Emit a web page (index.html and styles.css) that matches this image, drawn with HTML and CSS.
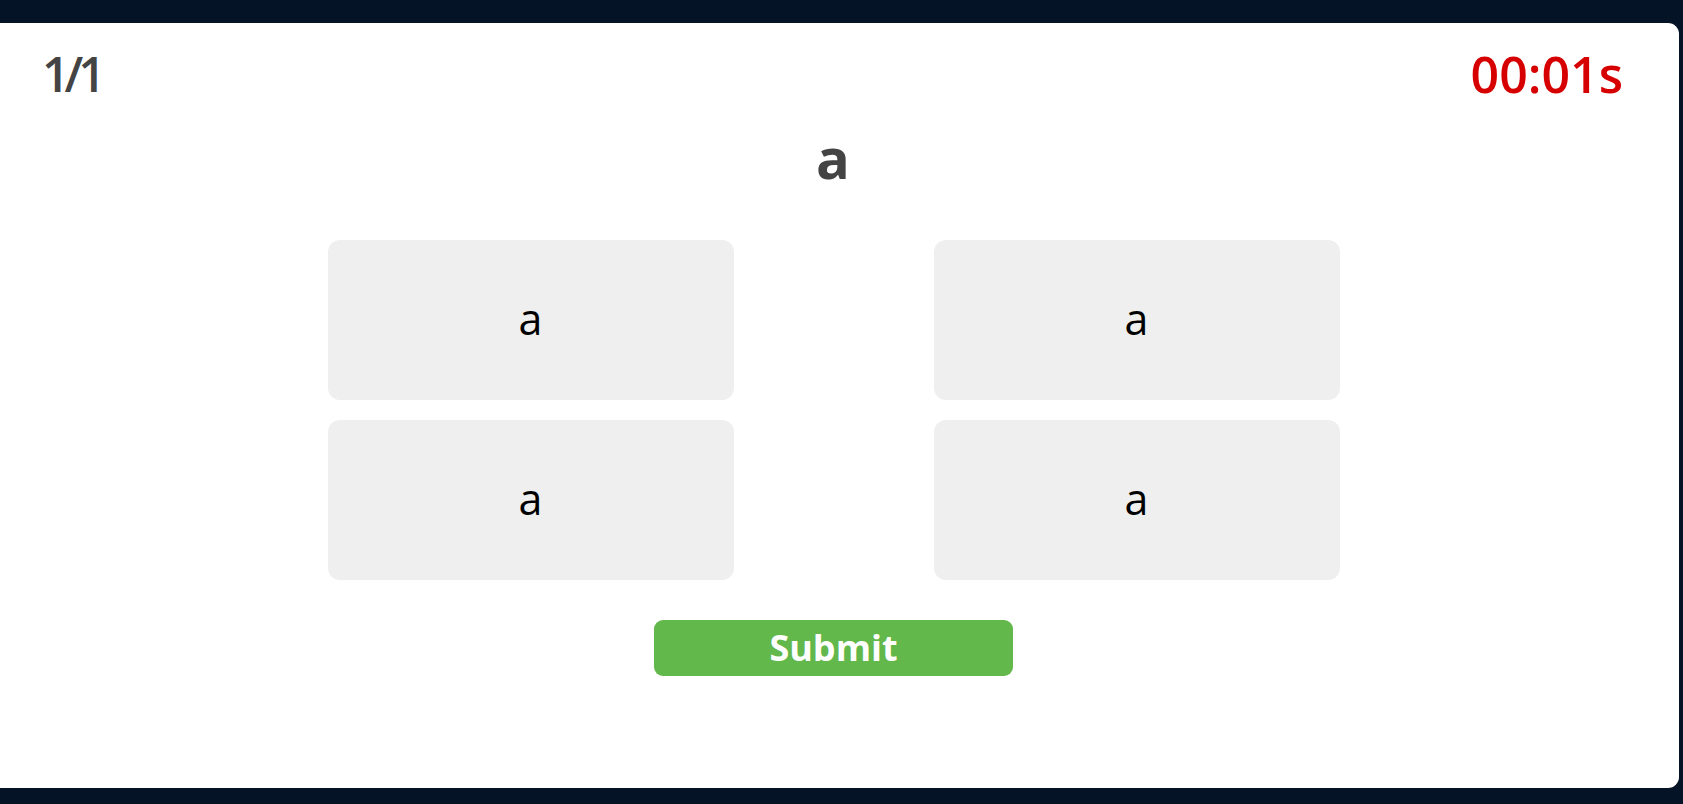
FILE: index.html
```html
<!DOCTYPE html>
<html lang="en">
<head>
<meta charset="utf-8">
<title>Quiz</title>
<link rel="stylesheet" href="styles.css">
</head>
<body>
  <main class="card">
    <header class="top">
      <span class="count">1/1</span>
      <span class="timer">00:01s</span>
    </header>
    <h1 class="question">a</h1>
    <div class="options">
      <button class="option">a</button>
      <button class="option">a</button>
      <button class="option">a</button>
      <button class="option">a</button>
    </div>
    <button class="submit">Submit</button>
  </main>
</body>
</html>
```
FILE: styles.css
```css
html, body {
  margin: 0;
  padding: 0;
}
body {
  background: #051326;
  height: 804px;
  overflow: hidden;
  font-family: "Open Sans", "Liberation Sans", sans-serif;
}
.card {
  margin-top: 23px;
  width: 1679px;
  height: 765px;
  box-sizing: border-box;
  background: #ffffff;
  border-radius: 0 11px 11px 0;
  padding: 27px 0 0 0;
  display: flex;
  flex-direction: column;
  align-items: stretch;
}
.top {
  display: flex;
  justify-content: space-between;
  padding: 0 56px 0 42px;
  font-size: 48px;
  line-height: 1;
  font-weight: 600;
  height: 48px;
}
.count {
  color: #444444;
  letter-spacing: -5px;
}
.timer {
  color: #d60000;
  font-size: 50px;
  position: relative;
  top: -1px;
}
.question {
  margin: 31px 13px 0 0;
  text-align: center;
  font-size: 56px;
  line-height: 1;
  font-weight: 700;
  color: #444444;
}
.options {
  margin: 55px 0 0 0;
  align-self: center;
  position: relative;
  left: -6px;
  display: grid;
  grid-template-columns: 406px 406px;
  grid-auto-rows: 160px;
  column-gap: 200px;
  row-gap: 20px;
}
.option {
  border: 0;
  margin: 0;
  background: #efefef;
  border-radius: 12px;
  font-family: inherit;
  font-size: 43px;
  font-weight: 400;
  color: #000000;
  display: flex;
  align-items: center;
  justify-content: center;
  padding: 0 0 3px 0;
}
.submit {
  margin: 40px 0 0 0;
  align-self: center;
  position: relative;
  left: -6px;
  width: 359px;
  height: 56px;
  border: 0;
  border-radius: 9px;
  background: #62b84b;
  color: #ffffff;
  font-family: inherit;
  font-size: 36px;
  line-height: 56px;
  font-weight: 700;
  padding: 0;
}
```
